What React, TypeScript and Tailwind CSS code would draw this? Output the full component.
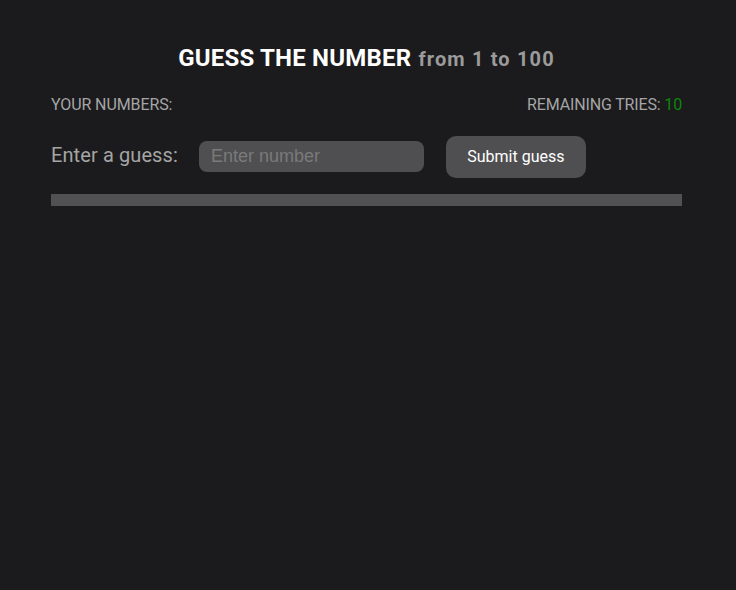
import React, { useState } from 'react';

export default function App() {
    const [guess, setGuess] = useState('');
    const [numbers] = useState<number[]>([]);
    const tries = 10;

    return (
        <div className="min-h-[590px] w-full bg-[#1b1b1d] font-['Roboto',sans-serif]">
            <div className="ml-[51px] w-[631px] pt-[42px]">
                <h1 className="text-center text-[24px] font-bold leading-[32px] tracking-[0.2px] text-white">
                    GUESS THE NUMBER <span className="ml-[1px] text-[20px] tracking-[1.15px] text-[#9b9b9b]">from 1 to 100</span>
                </h1>
                <div className="mt-[20px] flex justify-between text-[16px] leading-[20px] text-[#a5a5a5]">
                    <span className="tracking-[-0.1px]">YOUR NUMBERS: {numbers.join(', ')}</span>
                    <span className="tracking-[-0.15px]">
                        REMAINING TRIES: <span className="text-[#0c870c]">{tries}</span>
                    </span>
                </div>
                <div className="mt-[21px] flex items-center">
                    <label htmlFor="guess" className="mb-[4px] text-[20px] tracking-[0.1px] text-[#a5a5a5]">Enter a guess:</label>
                    <input
                        id="guess"
                        type="number"
                        value={guess}
                        onChange={e => setGuess(e.target.value)}
                        placeholder="Enter number"
                        className="mb-[2px] ml-[21px] h-[31px] w-[225px] rounded-[8px] bg-[#4f4f51] px-[12px] font-['Liberation_Sans',sans-serif] text-[18px] text-white placeholder:text-[#7a7a7a] focus:outline-none"
                    />
                    <button className="ml-[22px] h-[42px] w-[140px] rounded-[10px] bg-[#4f4f51] text-[16px] text-white">
                        Submit guess
                    </button>
                </div>
                <div className="mt-[16px] h-[12px] w-full bg-[#515153]" />
            </div>
        </div>
    );
}
